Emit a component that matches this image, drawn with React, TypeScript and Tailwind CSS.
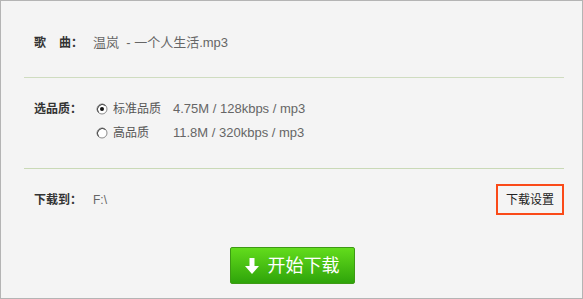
import React from 'react'

const font = 'font-["Liberation_Sans","Noto_Sans_CJK_SC",sans-serif]'

function Radio({ checked }: { checked: boolean }) {
  return (
    <svg width="12" height="12" viewBox="0 0 12 12" className="shrink-0">
      <circle cx="6" cy="6" r="5" fill="#fff" stroke="#8a8a8a" strokeWidth="1" />
      <path d="M2.5 9.5 A5 5 0 0 1 9.5 2.5" fill="none" stroke="#444" strokeWidth="1" />
      {checked && <circle cx="6" cy="6" r="2" fill="#111" />}
    </svg>
  )
}

function DownArrow() {
  return (
    <svg width="14" height="16" viewBox="0 0 14 16" className="shrink-0">
      <path d="M4.5 0 H9.5 V8 H14 L7 16 L0 8 H4.5 Z" fill="#fff" />
    </svg>
  )
}

export default function App() {
  return (
    <div
      className={`w-[583px] h-[299px] border border-[#b4b4b4] bg-[#f4f4f4] pl-[23px] pr-[18px] text-[12px] leading-[16px] text-[#666] ${font}`}
    >
      {/* 歌曲 */}
      <div className="h-[76px] pt-[34px] pl-[10px] flex">
        <span className="w-[59px] font-bold text-[#333] flex">
          <span className="w-[25px]">歌</span>
          <span>曲：</span>
        </span>
        <span className="text-[13px]">温岚&nbsp; - 一个人生活.mp3</span>
      </div>
      <div className="h-px bg-[#cfdcc0]" />

      {/* 品质 */}
      <div className="h-[90px] pt-[23px] pl-[10px] flex">
        <span className="w-[62px] font-bold text-[#333]">选品质：</span>
        <div className="flex flex-col gap-[8px]">
          <label className="flex items-center">
            <Radio checked />
            <span className="w-[60px] ml-[5px] text-[#555]">标准品质</span>
            <span className="text-[13px]">4.75M / 128kbps / mp3</span>
          </label>
          <label className="flex items-center">
            <Radio checked={false} />
            <span className="w-[60px] ml-[5px] text-[#555]">高品质</span>
            <span className="text-[13px]">11.8M / 320kbps / mp3</span>
          </label>
        </div>
      </div>
      <div className="h-px bg-[#c9d9b6]" />

      {/* 下载到 */}
      <div className="pt-[15px] pl-[10px] flex items-center justify-between">
        <div className="flex">
          <span className="w-[59px] font-bold text-[#333]">下载到：</span>
          <span>F:\</span>
        </div>
        <button className="w-[68px] h-[31px] border-2 border-[#fa4a18] text-[#222] flex items-center justify-center">
          下载设置
        </button>
      </div>

      <div className="mt-[32px] flex justify-center pr-[4px]">
        <button className="w-[125px] h-[37px] rounded-[2px] border border-[#3d9a14] bg-gradient-to-b from-[#62dc1c] to-[#2ea40a] flex items-center justify-center gap-[9px] text-white text-[18px] leading-[20px]">
          <DownArrow />
          <span>开始下载</span>
        </button>
      </div>
    </div>
  )
}
